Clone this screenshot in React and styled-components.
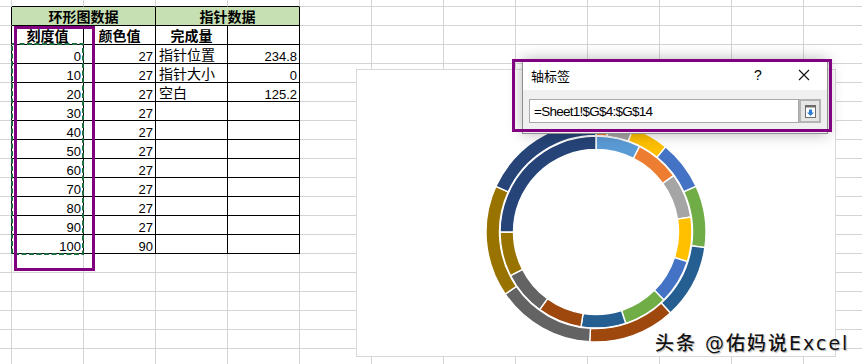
import React from "react";
import styled, { createGlobalStyle } from "styled-components";

const GlobalStyle = createGlobalStyle`
  html, body {
    margin: 0;
    padding: 0;
    background: #fff;
  }
  body {
    font-family: "Liberation Sans", "Noto Sans CJK SC", sans-serif;
  }
`;

const Page = styled.div`
  position: relative;
  width: 862px;
  height: 364px;
  overflow: hidden;
  background: #fff;
`;

// 工作表网格
const Sheet = styled.div`
  display: grid;
  grid-template-columns: 12px repeat(12, 72px);
  grid-template-rows: 7px repeat(19, 19px);
`;

const Cell = styled.div`
  box-sizing: border-box;
  grid-column: span ${(p) => p.$span || 1};
  border-right: 1px solid ${(p) => (p.$rb ? "#000" : "#d4d4d4")};
  border-bottom: 1px solid ${(p) => (p.$bb ? "#000" : "#d4d4d4")};
  background: ${(p) => p.$bg || "transparent"};
  display: flex;
  justify-content: ${(p) =>
    p.$align === "right" ? "flex-end" : p.$align === "center" ? "center" : "flex-start"};
  padding: ${(p) => (p.$num ? "3px" : "1px")} ${(p) => (p.$align === "right" ? "2px" : "3px")} 0;
  font-size: ${(p) => (p.$num ? "13px" : "14px")};
  font-weight: ${(p) => (p.$bold ? 700 : 400)};
  line-height: 18px;
  white-space: nowrap;
  color: #000;
`;

// 图表
const ChartFrame = styled.div`
  position: absolute;
  left: 356px;
  top: 69px;
  width: 480px;
  height: 288px;
  box-sizing: border-box;
  border: 1px solid #d9d9d9;
  background: #fff;
  display: flex;
  justify-content: center;
  padding-top: 47px;
`;

const Highlight = styled.div`
  position: absolute;
  left: ${(p) => p.$left}px;
  top: ${(p) => p.$top}px;
  width: ${(p) => p.$w}px;
  height: ${(p) => p.$h}px;
  box-sizing: border-box;
  border: 3px solid #800080;
`;

const CopyMarquee = styled.svg`
  position: absolute;
  left: 11px;
  top: 43px;
`;

// 对话框
const Dialog = styled.div`
  position: absolute;
  left: 522px;
  top: 59px;
  width: 306px;
  height: 75px;
  box-sizing: border-box;
  border: 1px solid #8f8f8f;
  background: #f0f0f0;
  box-shadow: 0 0 14px rgba(0, 0, 0, 0.28);
  display: flex;
  flex-direction: column;
`;

const TitleBar = styled.div`
  height: 30px;
  background: #fff;
  display: flex;
  align-items: center;
  padding-left: 8px;
  font: 13px "Noto Sans CJK SC", sans-serif;
  color: #000;
`;

const TitleText = styled.span`
  flex: 1;
`;

const CaptionButton = styled.div`
  width: 46px;
  height: 30px;
  display: flex;
  align-items: center;
  justify-content: center;
  font: 14px "Liberation Sans", sans-serif;
`;

const DialogBody = styled.div`
  flex: 1;
  display: flex;
  align-items: flex-start;
  padding: 9px 5px 0 6px;
`;

const RefInput = styled.div`
  width: 270px;
  height: 24px;
  box-sizing: border-box;
  border: 1px solid #a8a8a8;
  background: #fff;
  display: flex;
  align-items: center;
  padding-left: 4px;
  font: 13.5px "Liberation Sans", sans-serif;
  letter-spacing: -0.75px;
  color: #000;
`;

const CollapseButton = styled.div`
  width: 22px;
  height: 24px;
  box-sizing: border-box;
  border: 2px solid #b4b4b4;
  background: #e6e6e6;
  display: flex;
  align-items: center;
  justify-content: center;
`;

const Watermark = styled.div`
  position: absolute;
  left: 655px;
  top: 328px;
  font: 500 19px "DejaVu Sans", "Noto Sans CJK SC", sans-serif;
  letter-spacing: 2px;
  color: #111;
  white-space: nowrap;
  text-shadow: 0 0 2px #fff, 1px 1px 1px rgba(0, 0, 0, 0.35);
`;

const palette = [
  "#5B9BD5", "#ED7D31", "#A5A5A5", "#FFC000", "#4472C4", "#70AD47",
  "#255E91", "#9E480E", "#636363", "#997300", "#264478",
];

const scale = [0, 10, 20, 30, 40, 50, 60, 70, 80, 90, 100];
const colorVals = [27, 27, 27, 27, 27, 27, 27, 27, 27, 27, 90];
const pointer = [
  ["指针位置", "234.8"],
  ["指针大小", "0"],
  ["空白", "125.2"],
];

const C = 115;

const arc = (r0, r1, a0, a1) => {
  const xy = (r, a) => {
    const t = (a * Math.PI) / 180;
    return [C + r * Math.sin(t), C - r * Math.cos(t)];
  };
  const large = a1 - a0 > 180 ? 1 : 0;
  const [x1, y1] = xy(r1, a0);
  const [x2, y2] = xy(r1, a1);
  const [x3, y3] = xy(r0, a1);
  const [x4, y4] = xy(r0, a0);
  return `M${x1} ${y1}A${r1} ${r1} 0 ${large} 1 ${x2} ${y2}L${x3} ${y3}A${r0} ${r0} 0 ${large} 0 ${x4} ${y4}Z`;
};

const ring = (values, r0, r1) => {
  const total = values.reduce((a, b) => a + b, 0);
  let acc = 0;
  return values.map((v, i) => {
    const a0 = (acc / total) * 360;
    acc += v;
    const a1 = (acc / total) * 360;
    if (v === 0) return null;
    return <path key={i} d={arc(r0, r1, a0, a1)} fill={palette[i]} stroke="#fff" strokeWidth="1.4" />;
  });
};

const Donut = () => (
  <svg width="230" height="230" viewBox="0 0 230 230">
    {ring(colorVals, 82.5, 96)}
    {ring(scale, 96.5, 110)}
  </svg>
);

const cellContent = (r, c) => {
  if (r === 2) {
    const heads = ["", "刻度值", "颜色值", "完成量"];
    if (c >= 1 && c <= 3) return { text: heads[c], align: "center", bold: true };
  }
  if (r >= 3 && r <= 13) {
    const i = r - 3;
    if (c === 1) return { text: String(scale[i]), align: "right", num: true };
    if (c === 2) return { text: String(colorVals[i]), align: "right", num: true };
    if (i < 3 && c === 3) return { text: pointer[i][0], align: "left" };
    if (i < 3 && c === 4) return { text: pointer[i][1], align: "right", num: true };
  }
  return { text: "" };
};

const SheetGrid = () => {
  const cells = [];
  for (let r = 0; r < 20; r++) {
    for (let c = 0; c < 13; c++) {
      const rb = r >= 1 && r <= 13 && c <= 4;
      const bb = r <= 13 && c >= 1 && c <= 4;
      if (r === 1 && (c === 1 || c === 3)) {
        cells.push(
          <Cell key={`${r}-${c}`} $span={2} $rb $bb $bg="#c6e0b4" $align="center" $bold>
            {c === 1 ? "环形图数据" : "指针数据"}
          </Cell>
        );
        continue;
      }
      if (r === 1 && (c === 2 || c === 4)) continue;
      const info = cellContent(r, c);
      cells.push(
        <Cell key={`${r}-${c}`} $rb={rb} $bb={bb} $align={info.align} $bold={info.bold} $num={info.num}>
          {info.text}
        </Cell>
      );
    }
  }
  return <Sheet>{cells}</Sheet>;
};

export default function App() {
  return (
    <Page>
      <GlobalStyle />
      <SheetGrid />

      <ChartFrame>
        <Donut />
      </ChartFrame>

      <CopyMarquee width="73" height="212">
        <rect x="1" y="1" width="71" height="210" fill="none" stroke="#1e6b40" strokeWidth="2" strokeDasharray="5 2.5" />
      </CopyMarquee>
      <Highlight $left={14} $top={26} $w={81} $h={245} />

      <Dialog>
        <TitleBar>
          <TitleText>轴标签</TitleText>
          <CaptionButton>?</CaptionButton>
          <CaptionButton>
            <svg width="12" height="12" viewBox="0 0 12 12">
              <path d="M1 1L11 11M11 1L1 11" stroke="#111" strokeWidth="1.1" />
            </svg>
          </CaptionButton>
        </TitleBar>
        <DialogBody>
          <RefInput>=Sheet1!$G$4:$G$14</RefInput>
          <CollapseButton>
            <svg width="11" height="13" viewBox="0 0 11 13">
              <rect x="0.5" y="0.5" width="10" height="12" fill="#fff" stroke="#6d6d6d" />
              <rect x="0.5" y="0.5" width="10" height="2" fill="#6d6d6d" />
              <path d="M4 4.5h3v3h2l-3.5 3.5L2 7.5h2z" fill="#2f7fd0" />
            </svg>
          </CollapseButton>
        </DialogBody>
      </Dialog>
      <Highlight $left={512} $top={59} $w={320} $h={73} />

      <Watermark>头条 @佑妈说Excel</Watermark>
    </Page>
  );
}
